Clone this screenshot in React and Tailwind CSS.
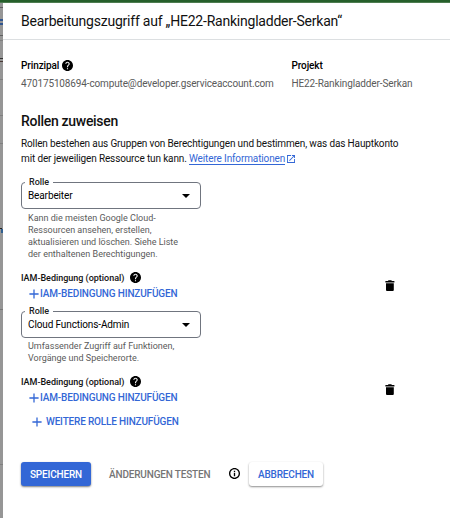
import React from "react";

function HelpIcon({ className }) {
  return (
    <svg viewBox="2 2 20 20" className={className} fill="#000">
      <path d="M12 2C6.48 2 2 6.48 2 12s4.48 10 10 10 10-4.48 10-10S17.52 2 12 2zm1 17h-2v-2h2v2zm2.07-7.75l-.9.92C13.45 12.9 13 13.5 13 15h-2v-.5c0-1.1.45-2.1 1.17-2.83l1.24-1.26c.37-.36.59-.86.59-1.41 0-1.1-.9-2-2-2s-2 .9-2 2H8c0-2.21 1.79-4 4-4s4 1.79 4 4c0 .88-.36 1.68-.93 2.25z" />
    </svg>
  );
}

function TrashIcon() {
  return (
    <svg viewBox="0 0 10 11" className="block h-[11px] w-[10px]" fill="#000">
      <path d="M3.2 0.2h3.4v0.8H9.4v1.4H0.4V1h2.8zM1 3.2h7.8V10q0 1-1 1H2q-1 0-1-1z" />
    </svg>
  );
}

function PlusIcon({ className }) {
  return (
    <svg viewBox="0 0 10 10" className={className} stroke="#3367d6" strokeWidth="1.3">
      <path d="M5 0.4V9.6M0.4 5H9.6" />
    </svg>
  );
}

function RoleSelect({ value }) {
  return (
    <fieldset className="mx-0 h-[31px] w-[180px] rounded-[4px] border border-[#70757f] pl-[6px]">
      <legend className="ml-[-3px] h-[8px] px-[4px] text-[9px] leading-[8px] font-medium text-[#222]">
        Rolle
      </legend>
      <div className="flex h-[20px] items-center justify-between pr-[10px]">
        <span className="text-[10px] leading-[20px] tracking-[-0.12px] text-black">{value}</span>
        <svg viewBox="0 0 8 4" className="h-[4px] w-[8px]">
          <path d="M0 0h8L4 4z" fill="#000" />
        </svg>
      </div>
    </fieldset>
  );
}

function Condition() {
  return (
    <div className="flex h-[30px] justify-between pr-[55px]">
      <div>
        <div className="flex h-[14px] items-center">
          <span className="w-[109px] text-[9px] leading-[14px] font-medium tracking-[-0.02px] whitespace-nowrap text-[#111]">
            IAM-Bedingung (optional)
          </span>
          <HelpIcon className="-mt-[2px] h-[11px] w-[11px]" />
        </div>
        <div className="mt-[2px] flex h-[14px] items-center pl-[8px]">
          <PlusIcon className="mr-[1px] h-[10px] w-[10px]" />
          <span className="text-[10px] leading-[14px] font-medium tracking-[-0.15px] whitespace-nowrap text-[#3367d6]">
            IAM-BEDINGUNG HINZUFÜGEN
          </span>
        </div>
      </div>
      <div className="pt-[9px]">
        <TrashIcon />
      </div>
    </div>
  );
}

export default function App() {
  return (
    <div className="flex h-[518px] w-[450px] flex-col overflow-hidden bg-white font-['Roboto',sans-serif]">
      <div className="h-[3px] shrink-0 border-b border-[#4d7d50] bg-[#265f2b]" />
      <div className="flex flex-1">
        <div className="flex w-[3px] flex-col overflow-hidden bg-[#969696]">
          <div className="mt-[4px] h-px bg-[#606060]" />
          <div className="mt-[11px] h-[2px] bg-[#31568f]" />
          <div className="mt-[2px] h-[2px] bg-[#31568f]" />
          <div className="mt-[10px] h-px bg-[#606060]" />
          <div className="mt-[4px] h-px bg-[#808080]" />
          <div className="mt-[17px] h-px bg-[#333]" />
          <div className="mt-[2px] h-px bg-[#4a3a36]" />
          <div className="mt-[17px] h-px bg-[#808080]" />
          <div className="mt-[35px] h-px bg-[#808080]" />
          <div className="mt-[27px] h-px bg-[#808080]" />
          <div className="mt-[84px] h-px w-[2px] bg-[#222]" />
          <div className="ml-px h-[4px] bg-[#315f8f]" />
          <div className="mt-[76px] h-px bg-[#777]" />
          <div className="mt-[154px] h-px bg-[#808080]" />
        </div>
        <div className="min-w-0 flex-1">
          <header className="flex h-[37px] items-center border-b border-[#dcdfe1] pl-[18px]">
            <h1 className="text-[14px] leading-[20px] tracking-[-0.22px] whitespace-nowrap text-[#111]">
              Bearbeitungszugriff auf „HE22-Rankingladder-Serkan“
            </h1>
          </header>
          <main className="pl-[18px]">
            <section className="flex pt-[19px]">
              <div className="w-[270.5px]">
                <div className="flex h-[14px] items-center text-[10px] leading-[14px] font-medium tracking-[-0.1px] text-black">
                  <span className="w-[41px]">Prinzipal</span>
                  <HelpIcon className="-mt-[2px] h-[11px] w-[11px]" />
                </div>
                <div className="mt-[4px] text-[10px] leading-[14px] tracking-[-0.14px] whitespace-nowrap text-[#5a5a5a]">
                  470175108694-compute@developer.gserviceaccount.com
                </div>
              </div>
              <div>
                <div className="text-[10px] leading-[14px] font-medium tracking-[-0.1px] text-black">Projekt</div>
                <div className="mt-[4px] text-[10px] leading-[14px] tracking-[-0.12px] whitespace-nowrap text-[#5a5a5a]">
                  HE22-Rankingladder-Serkan
                </div>
              </div>
            </section>
            <h2 className="mt-[21px] text-[14px] leading-[18px] font-medium tracking-[-0.3px] text-[#111]">
              Rollen zuweisen
            </h2>
            <p className="mt-[6px] text-[10px] leading-[15px] tracking-[-0.135px] whitespace-nowrap text-[#111]">
              Rollen bestehen aus Gruppen von Berechtigungen und bestimmen, was das Hauptkonto
              <br />
              mit der jeweiligen Ressource tun kann.{" "}
              <span className="border-b border-[#3367d6] text-[#3367d6]">Weitere Informationen</span>
              <svg viewBox="3 3 18 18" className="ml-[2px] inline-block h-[8px] w-[8px] align-[-1px]" fill="#3367d6">
                <path d="M19 19H5V5h7V3H3v18h18v-9h-2v7zM14 3v2h3.59l-9.83 9.83 1.41 1.41L19 6.41V10h2V3h-7z" />
              </svg>
            </p>
            <div className="mt-[12px]">
              <RoleSelect value="Bearbeiter" />
              <p className="mt-[3px] pl-[7px] text-[9px] leading-[12px] whitespace-nowrap text-[#5a5a5a]">
                Kann die meisten Google Cloud-
                <br />
                Ressourcen ansehen, erstellen,
                <br />
                aktualisieren und löschen. Siehe Liste
                <br />
                der enthaltenen Berechtigungen.
              </p>
            </div>
            <div className="mt-[11px]">
              <Condition />
            </div>
            <div className="mt-[6px]">
              <RoleSelect value="Cloud Functions-Admin" />
              <p className="mt-[2px] pl-[7px] text-[9px] leading-[12px] whitespace-nowrap text-[#5a5a5a]">
                Umfassender Zugriff auf Funktionen,
                <br />
                Vorgänge und Speicherorte.
              </p>
            </div>
            <div className="mt-[11px]">
              <Condition />
            </div>
            <div className="mt-[10px] flex h-[14px] items-center pl-[11px]">
              <PlusIcon className="mr-[4px] h-[10px] w-[10px]" />
              <span className="text-[10px] leading-[14px] font-medium tracking-[-0.17px] whitespace-nowrap text-[#3367d6]">
                WEITERE ROLLE HINZUFÜGEN
              </span>
            </div>
            <div className="mt-[33px] flex h-[24px] items-center text-[10px] font-medium tracking-[-0.17px]">
              <button className="h-[24px] w-[70px] rounded-[3px] bg-[#3367d6] tracking-[-0.17px] text-white shadow-[0_1px_2px_rgba(0,0,0,0.5)]">
                SPEICHERN
              </button>
              <span className="ml-[18px] w-[120px] whitespace-nowrap text-[#757575]">ÄNDERUNGEN TESTEN</span>
              <svg viewBox="2 2 20 20" className="-mt-[2px] h-[11px] w-[11px]" fill="#000">
                <path d="M10.8 6.8h2.4v2.4h-2.4zm0 4h2.4v6.4h-2.4zM12 2C6.48 2 2 6.48 2 12s4.48 10 10 10 10-4.48 10-10S17.52 2 12 2zm0 17.6c-4.2 0-7.6-3.4-7.6-7.6s3.4-7.6 7.6-7.6 7.6 3.4 7.6 7.6-3.4 7.6-7.6 7.6z" />
              </svg>
              <button className="ml-[9px] h-[24px] w-[74px] rounded-[3px] bg-white tracking-[-0.17px] text-[#3367d6] shadow-[0_1px_2px_rgba(0,0,0,0.45)]">
                ABBRECHEN
              </button>
            </div>
          </main>
        </div>
      </div>
    </div>
  );
}
